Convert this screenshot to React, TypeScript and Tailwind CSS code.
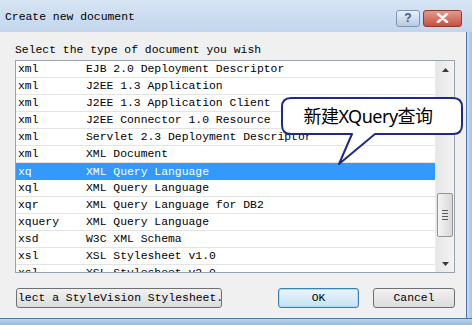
import React from "react";

const rows: [string, string][] = [
  ["xml", "EJB 2.0 Deployment Descriptor"],
  ["xml", "J2EE 1.3 Application"],
  ["xml", "J2EE 1.3 Application Client"],
  ["xml", "J2EE Connector 1.0 Resource"],
  ["xml", "Servlet 2.3 Deployment Descriptor"],
  ["xml", "XML Document"],
  ["xq", "XML Query Language"],
  ["xql", "XML Query Language"],
  ["xqr", "XML Query Language for DB2"],
  ["xquery", "XML Query Language"],
  ["xsd", "W3C XML Schema"],
  ["xsl", "XSL Stylesheet v1.0"],
  ["xsl", "XSL Stylesheet v2.0"],
];

export default function App() {
  return (
    <div className="relative w-[472px] h-[325px] overflow-hidden flex flex-col bg-[#bcd3eb] font-['Liberation_Mono',monospace] text-[11.4px] text-black">
      {/* Title bar */}
      <div className="h-[32px] flex items-center bg-gradient-to-b from-[#d6e4f3] to-[#c2d6ec] pl-[5px] pr-[10px]">
        <div className="flex-1 leading-[14px] pt-[1px]">Create new document</div>
        <div className="flex items-center gap-[3px] mt-[4px]">
          <div className="w-[24px] h-[17px] rounded-[3px] border border-[#7d95b1] bg-gradient-to-b from-[#e8f0f8] to-[#b9cbe0] flex items-center justify-center text-[#3d5a80] font-['Liberation_Sans',sans-serif] font-bold text-[12px] leading-none">
            ?
          </div>
          <div className="w-[39px] h-[17px] rounded-[3px] border border-[#8f3a32] bg-gradient-to-b from-[#e3998b] to-[#c5503f] flex items-center justify-center">
            <svg width="13" height="10" viewBox="0 0 13 10">
              <path d="M2 1 L11 9 M11 1 L2 9" stroke="#ffffff" strokeWidth="2.6" strokeLinecap="round" />
            </svg>
          </div>
        </div>
      </div>

      <div className="flex-1 flex">
        {/* Body */}
        <div className="w-[466px] h-[286px] bg-[#f0f0f0] flex flex-col">
          <div className="pl-[15px] pt-[11px] h-[28px] leading-[14px]">Select the type of document you wish</div>
          <div className="ml-[15px] w-[440px] h-[213px] border border-[#9aa3ad] bg-white flex">
            <div className="flex-1 flex flex-col overflow-hidden">
              {rows.map(([ext, name], i) => {
                const sel = i === 6;
                return (
                  <div
                    key={i}
                    className={
                      sel
                        ? "h-[17px] shrink-0 flex items-center pt-[2px] bg-[#3399ff] text-white"
                        : "h-[17px] shrink-0 flex items-center pt-[2px] border-b border-[#e4e4e4]"
                    }
                  >
                    <div className="w-[70px] pl-[2px] whitespace-pre">{ext}</div>
                    <div className="whitespace-pre">{name}</div>
                  </div>
                );
              })}
            </div>
            {/* Scrollbar */}
            <div className="w-[19px] flex flex-col bg-gradient-to-r from-[#e6e6e6] to-[#f4f4f4] border-l border-[#ececec]">
              <div className="h-[17px] flex items-center justify-center">
                <svg width="7" height="4" viewBox="0 0 7 4">
                  <path d="M0 4 L3.5 0 L7 4 Z" fill="#3a3a3a" />
                </svg>
              </div>
              <div className="h-[115px]" />
              <div className="h-[44px] mx-[1px] rounded-[2px] border border-[#959595] bg-gradient-to-r from-[#f4f4f4] to-[#d8d8d8] flex flex-col items-center justify-center gap-[2px]">
                <div className="w-[6px] h-[1px] bg-[#5a5a5a]" />
                <div className="w-[6px] h-[1px] bg-[#5a5a5a]" />
                <div className="w-[6px] h-[1px] bg-[#5a5a5a]" />
                <div className="w-[6px] h-[1px] bg-[#5a5a5a]" />
              </div>
              <div className="flex-1" />
              <div className="h-[17px] flex items-center justify-center">
                <svg width="7" height="4" viewBox="0 0 7 4">
                  <path d="M0 0 L7 0 L3.5 4 Z" fill="#3a3a3a" />
                </svg>
              </div>
            </div>
          </div>
          <div className="mt-[15px] flex items-center h-[20px]">
            <div className="ml-[16px] w-[206px] h-[20px] rounded-[3px] border border-[#707070] bg-gradient-to-b from-[#f2f2f2] to-[#dcdcdc] flex items-center pl-[1px] pt-[1px] overflow-hidden whitespace-pre">
              lect a StyleVision Stylesheet.
            </div>
            <div className="ml-[56px] w-[81px] h-[20px] rounded-[3px] border border-[#3c7fb1] bg-gradient-to-b from-[#eaf5fc] to-[#c4e2f4] shadow-[inset_0_0_0_1px_#a8dbf5] flex items-center justify-center pt-[1px]">
              OK
            </div>
            <div className="ml-[14px] w-[82px] h-[20px] rounded-[3px] border border-[#707070] bg-gradient-to-b from-[#f2f2f2] to-[#dcdcdc] flex items-center justify-center pt-[1px]">
              Cancel
            </div>
          </div>
        </div>
        {/* Right frame */}
        <div className="flex-1 border-l border-[#4a77a8] bg-gradient-to-r from-[#c9dbef] to-[#a9c3e0]" />
      </div>
      {/* Bottom frame */}
      <div className="h-[7px] border-t border-[#4a77a8] bg-gradient-to-b from-[#bcd3eb] to-[#9bb8d9]" />

      {/* Callout bubble */}
      <svg className="absolute left-0 top-0 pointer-events-none" width="472" height="325" viewBox="0 0 472 325">
        <path
          d="M291 98 H453 Q462 98 462 107 V125 Q462 134 453 134 H375 L339 164 L352 134 H291 Q282 134 282 125 V107 Q282 98 291 98 Z"
          fill="#ffffff"
          stroke="#1f2a86"
          strokeWidth="2"
          strokeLinejoin="round"
        />
      </svg>
      <div className="absolute left-[282px] top-[98px] w-[180px] h-[36px] flex items-center justify-center font-['Noto_Sans','Noto_Sans_CJK_SC',sans-serif] text-[18px] leading-none text-black tracking-[-0.5px] pr-[8px]">
        新建XQuery查询
      </div>
    </div>
  );
}
